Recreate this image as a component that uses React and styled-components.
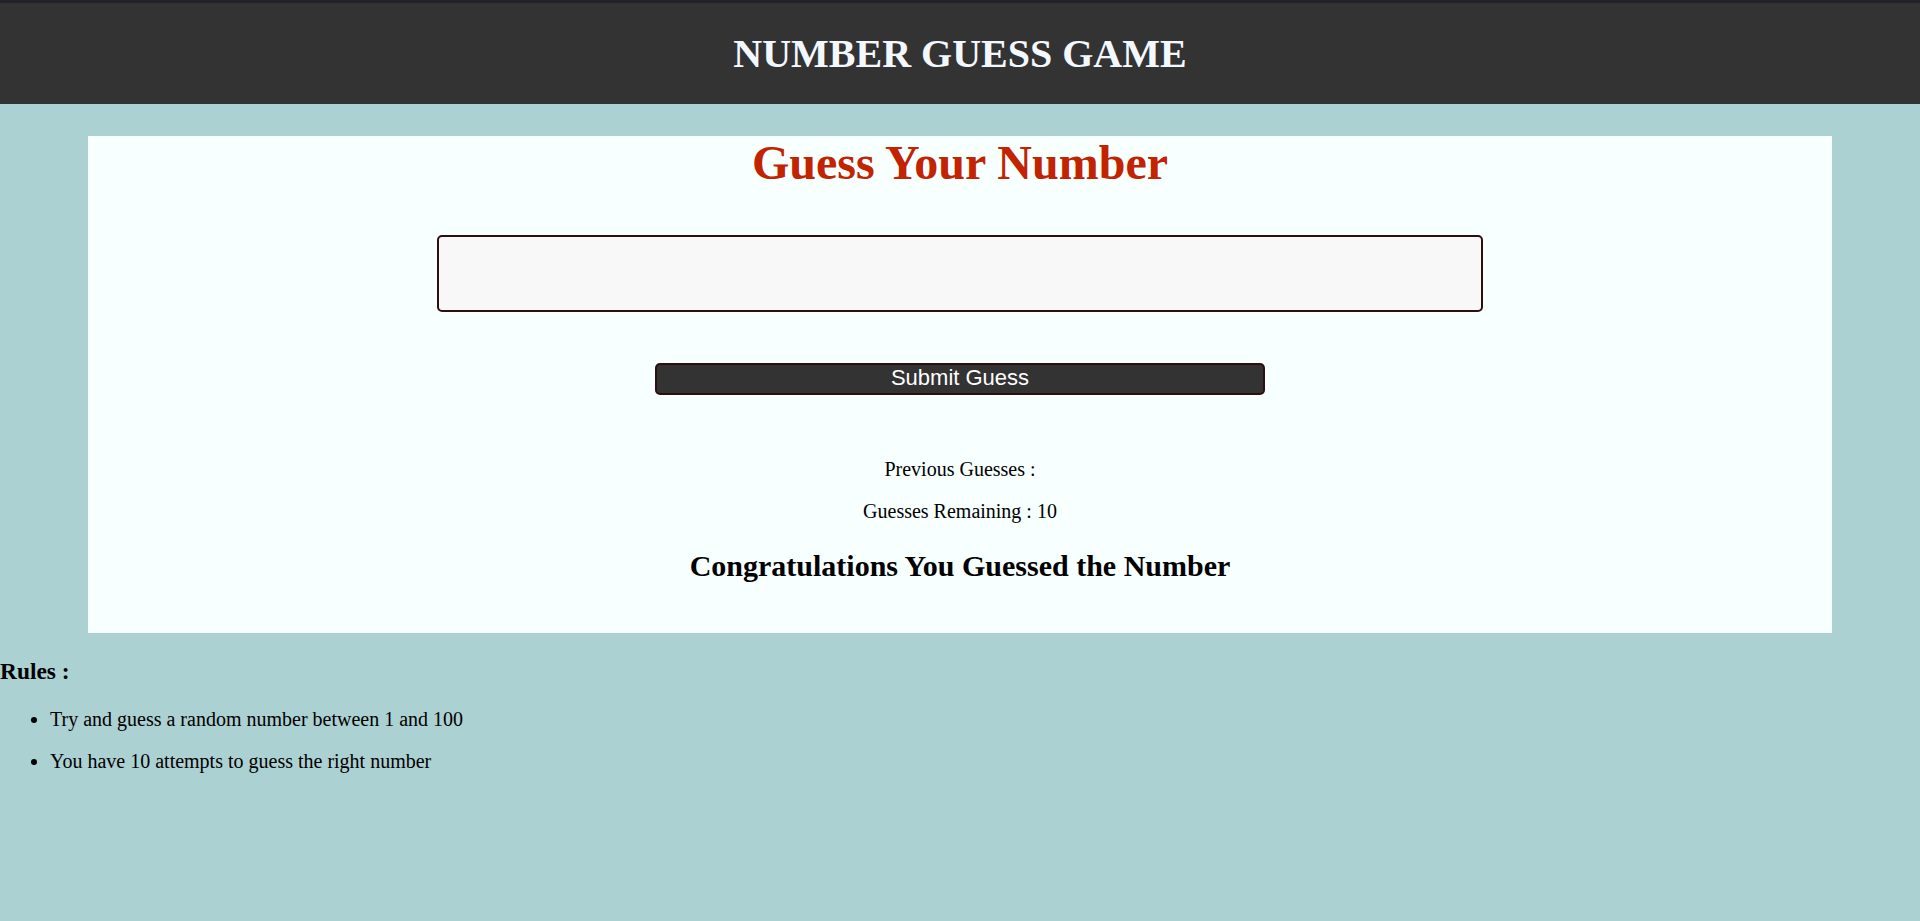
import React from "react";
import styled, { createGlobalStyle } from "styled-components";

const GlobalStyle = createGlobalStyle`
  html, body {
    margin: 0;
    padding: 0;
    background: #acd1d2;
    font-family: "Liberation Serif", "Times New Roman", serif;
    color: #000;
  }
  body {
    min-height: 921px;
  }
`;

const Page = styled.div`
  display: flex;
  flex-direction: column;
`;

const Header = styled.header`
  height: 101px;
  background: #333333;
  border-top: 3px solid #22232a;
  display: flex;
  align-items: center;
  justify-content: center;
`;

const HeaderTitle = styled.h1`
  margin: 0;
  font-size: 40px;
  line-height: 44px;
  font-weight: 700;
  color: #f3f8ff;
`;

const Card = styled.main`
  margin: 32px 88px 0;
  background: #f7ffff;
  display: flex;
  flex-direction: column;
  align-items: center;
  text-align: center;
`;

const GameTitle = styled.h1`
  margin: 0;
  font-size: 48px;
  line-height: 54px;
  font-weight: 700;
  color: #c22300;
`;

const GuessInput = styled.input`
  margin-top: 45px;
  width: 60%;
  height: 77px;
  box-sizing: border-box;
  background: #f9f8f8;
  border: 2px solid #2b1010;
  border-radius: 5px;
  font-family: "Liberation Sans", Arial, sans-serif;
  font-size: 20px;
  padding: 0 12px;
  outline: none;
`;

const SubmitButton = styled.button`
  margin-top: 51px;
  width: 35%;
  height: 32px;
  box-sizing: border-box;
  background: #333333;
  color: #ffffff;
  border: 2px solid #2b1010;
  border-radius: 5px;
  font-family: "Liberation Sans", Arial, sans-serif;
  font-size: 22px;
  line-height: 26px;
  padding: 0 0 2px;
  cursor: pointer;
`;

const InfoText = styled.p`
  margin: ${(p) => p.$top}px 0 0;
  font-size: 20px;
  line-height: 23px;
`;

const Message = styled.h2`
  margin: 26px 0 50px;
  font-size: 30px;
  line-height: 34px;
  font-weight: 700;
`;

const Rules = styled.section`
  display: flex;
  flex-direction: column;
`;

const RulesTitle = styled.h3`
  margin: 25px 0 0;
  font-size: 23.4px;
  line-height: 26px;
  font-weight: 700;
`;

const RuleList = styled.ul`
  margin: 24px 0 0;
  padding-left: 50px;
`;

const RuleItem = styled.li`
  font-size: 20px;
  line-height: 23px;
  margin-bottom: 19px;
`;

export default function App() {
  return (
    <Page>
      <GlobalStyle />
      <Header>
        <HeaderTitle>NUMBER GUESS GAME</HeaderTitle>
      </Header>
      <Card>
        <GameTitle>Guess Your Number</GameTitle>
        <GuessInput type="text" aria-label="Your guess" />
        <SubmitButton type="button">Submit Guess</SubmitButton>
        <InfoText $top={63}>Previous Guesses :</InfoText>
        <InfoText $top={19}>Guesses Remaining : 10</InfoText>
        <Message>Congratulations You Guessed the Number</Message>
      </Card>
      <Rules>
        <RulesTitle>Rules :</RulesTitle>
        <RuleList>
          <RuleItem>Try and guess a random number between 1 and 100</RuleItem>
          <RuleItem>You have 10 attempts to guess the right number</RuleItem>
        </RuleList>
      </Rules>
    </Page>
  );
}
